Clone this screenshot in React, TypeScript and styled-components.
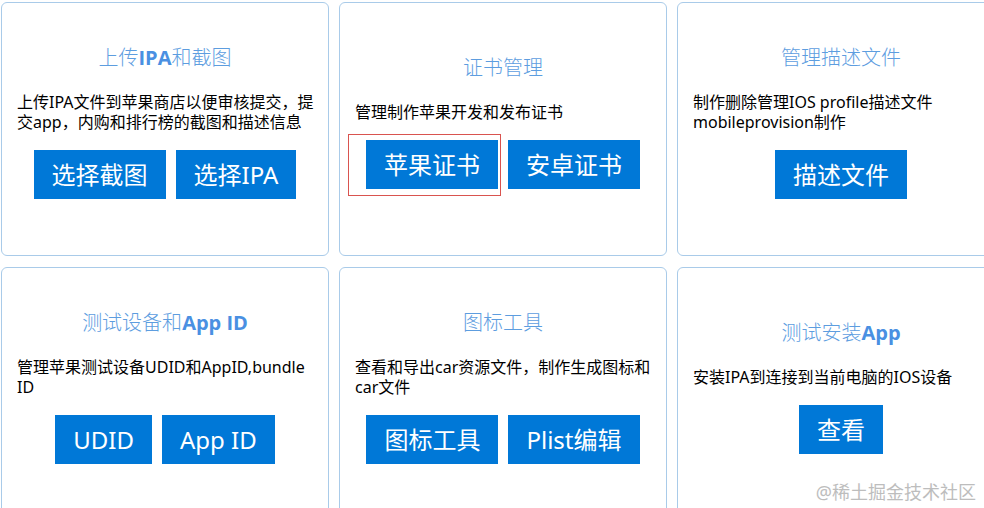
import React from "react";
import styled, { createGlobalStyle } from "styled-components";

const GlobalStyle = createGlobalStyle`
  html, body {
    margin: 0;
    padding: 0;
    background: #ffffff;
    overflow: hidden;
  }
  body {
    font-family: "Noto Sans", "Noto Sans CJK SC", sans-serif;
    color: #000;
  }
`;

const Page = styled.div`
  position: relative;
  width: 984px;
  height: 508px;
  overflow: hidden;
`;

const Grid = styled.div`
  display: grid;
  grid-template-columns: repeat(3, 328px);
  grid-auto-rows: 254px;
  column-gap: 10px;
  row-gap: 11px;
  padding: 2px 0 0 1px;
  width: max-content;
`;

const Card = styled.section`
  box-sizing: border-box;
  border: 1px solid #a9cbe9;
  border-radius: 6px;
  background: #fff;
  display: flex;
  flex-direction: column;
  justify-content: center;
  padding: 0 15px 15px 15px;
`;

const Title = styled.h2`
  margin: 0;
  text-align: center;
  font-family: "Noto Sans", "Noto Sans CJK SC", sans-serif;
  font-size: 20px;
  line-height: 28px;
  font-weight: 300;
  color: #5d9ddf;

  b {
    font-weight: 700;
    color: #4a90e2;
    font-family: "Open Sans", "Noto Sans", sans-serif;
  }
`;

const Desc = styled.p`
  margin: 21px -8px 0 0;
  font-size: 16px;
  line-height: 19.5px;
  color: #000;
  font-family: "Noto Sans", "Noto Sans CJK SC", sans-serif;
`;

const Buttons = styled.div`
  display: flex;
  justify-content: center;
  gap: 10px;
  margin-top: 18px;
`;

const Slot = styled.span<{ $marked?: boolean }>`
  position: relative;
  display: inline-flex;

  ${({ $marked }) =>
    $marked
      ? `
    &::after {
      content: "";
      position: absolute;
      left: -18px;
      right: -3px;
      top: -6px;
      bottom: -7px;
      border: 1px solid #d9534f;
      pointer-events: none;
    }
  `
      : ""}
`;

const Button = styled.button`
  height: 49px;
  padding: 0 18px;
  border: none;
  border-radius: 0;
  background: #0078d7;
  color: #fff;
  font-family: "Noto Sans", "Noto Sans CJK SC", sans-serif;
  font-size: 24px;
  font-weight: 400;
  line-height: 49px;
  cursor: pointer;
  white-space: nowrap;
`;

const Watermark = styled.div`
  position: absolute;
  right: 8px;
  bottom: 4px;
  font-family: "Noto Sans", "Noto Sans CJK SC", sans-serif;
  font-size: 18px;
  line-height: 24px;
  color: #bdbdbd;
  letter-spacing: 0;
`;

type Tool = {
  title: React.ReactNode;
  desc: string;
  buttons: string[];
  marked?: number;
};

const tools: Tool[] = [
  {
    title: (
      <>
        上传<b>IPA</b>和截图
      </>
    ),
    desc: "上传IPA文件到苹果商店以便审核提交，提交app，内购和排行榜的截图和描述信息",
    buttons: ["选择截图", "选择IPA"],
  },
  {
    title: <>证书管理</>,
    desc: "管理制作苹果开发和发布证书",
    buttons: ["苹果证书", "安卓证书"],
    marked: 0,
  },
  {
    title: <>管理描述文件</>,
    desc: "制作删除管理IOS profile描述文件 mobileprovision制作",
    buttons: ["描述文件"],
  },
  {
    title: (
      <>
        测试设备和<b>App ID</b>
      </>
    ),
    desc: "管理苹果测试设备UDID和AppID,bundle ID",
    buttons: ["UDID", "App ID"],
  },
  {
    title: <>图标工具</>,
    desc: "查看和导出car资源文件，制作生成图标和car文件",
    buttons: ["图标工具", "Plist编辑"],
  },
  {
    title: (
      <>
        测试安装<b>App</b>
      </>
    ),
    desc: "安装IPA到连接到当前电脑的IOS设备",
    buttons: ["查看"],
  },
];

export default function App() {
  return (
    <Page>
      <GlobalStyle />
      <Grid>
        {tools.map((t, i) => (
          <Card key={i}>
            <Title>{t.title}</Title>
            <Desc>{t.desc}</Desc>
            <Buttons>
              {t.buttons.map((b, j) => (
                <Slot key={b} $marked={t.marked === j}>
                  <Button type="button">{b}</Button>
                </Slot>
              ))}
            </Buttons>
          </Card>
        ))}
      </Grid>
      <Watermark>@稀土掘金技术社区</Watermark>
    </Page>
  );
}
